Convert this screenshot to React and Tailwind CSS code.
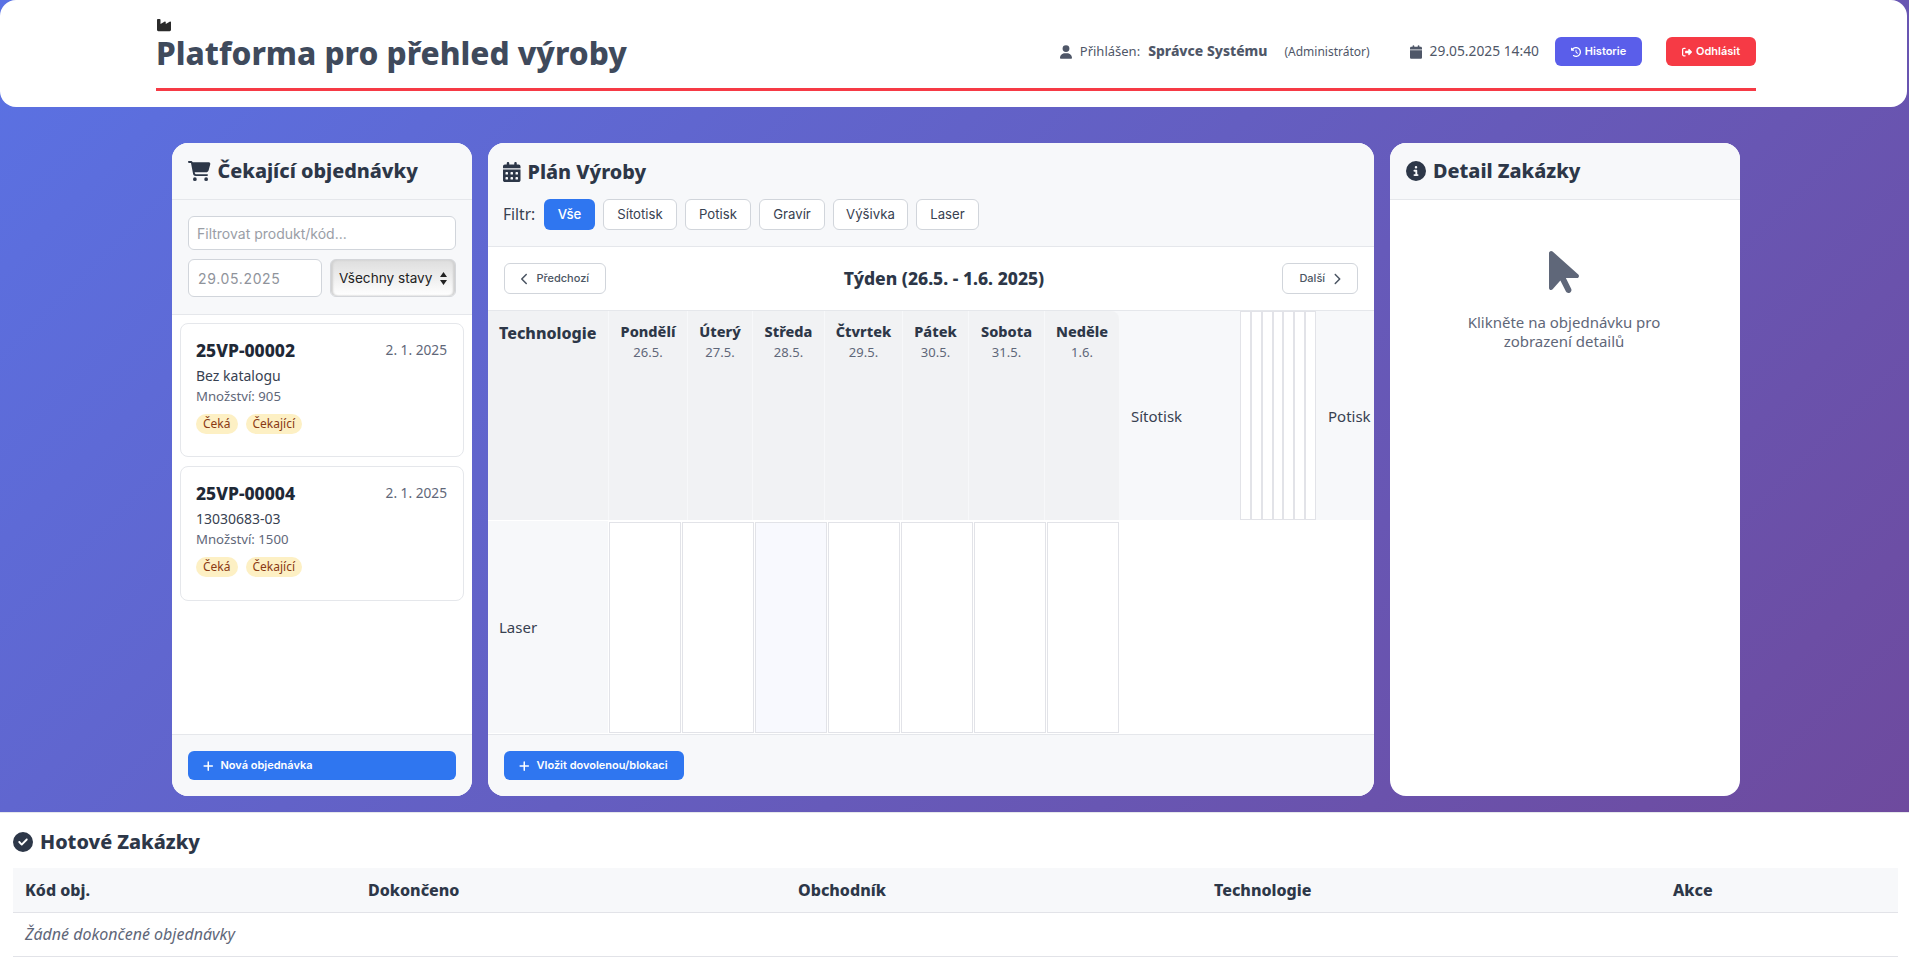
import React from "react";
import { FaIndustry, FaCartShopping, FaCalendarDays, FaCircleInfo, FaUser, FaCalendar, FaClockRotateLeft, FaRightFromBracket, FaArrowPointer, FaCircleCheck, FaPlus, FaChevronLeft, FaChevronRight } from "react-icons/fa6";

const days = [
  ["Pondělí", "26.5.", "w-[78px]"],
  ["Úterý", "27.5.", "w-[64px]"],
  ["Středa", "28.5.", "w-[71px]"],
  ["Čtvrtek", "29.5.", "w-[77px]"],
  ["Pátek", "30.5.", "w-[65px]"],
  ["Sobota", "31.5.", "w-[75px]"],
  ["Neděle", "1.6.", "w-[74px] rounded-tr-lg"],
];
const filters = ["Sítotisk", "Potisk", "Gravír", "Výšivka", "Laser"];
const orders = [
  ["25VP-00002", "Bez katalogu", "905", "h-[134px]"],
  ["25VP-00004", "13030683-03", "1500", "h-[135px]"],
];
const sans = "font-['Noto_Sans',sans-serif]";
const ui = "font-['Inter',sans-serif]";

function PanelTitle({ icon, children }) {
  return (
    <h2 className="flex items-center gap-[7px] text-[19.8px] font-extrabold leading-[28px] text-[#2d3748]">
      {icon}
      {children}
    </h2>
  );
}

function OrderCard({ code, name, qty, h }) {
  return (
    <div className={`${h} rounded-lg border border-[#e5e7eb] bg-white pl-[15px] pr-4 pt-[14px]`}>
      <div className="flex items-center justify-between">
        <span className="text-[17.5px] font-extrabold leading-[24px] text-[#1f2937]">{code}</span>
        <span className="text-[13.7px] text-[#5f6779]">2. 1. 2025</span>
      </div>
      <div className="mt-[3px] text-[14px] leading-[21px] text-[#374151]">{name}</div>
      <div className="text-[13.2px] leading-[21px] text-[#5f6779]">Množství: {qty}</div>
      <div className="mt-[7px] flex gap-2">
        {["Čeká", "Čekající"].map((b) => (
          <span key={b} className="flex h-[20px] items-center rounded-full bg-[#fdf0c4] px-[7px] text-[12px] text-[#8a3a14]">{b}</span>
        ))}
      </div>
    </div>
  );
}

export default function App() {
  return (
    <div className={`${sans} h-[969px] w-[1909px] overflow-hidden bg-white`}>
      <div className="bg-[linear-gradient(135deg,#5a72e4_0%,#6e4a9e_100%)] pb-4">
        <header className="h-[107px] w-[1907px] rounded-2xl bg-white">
          <div className="ml-[156px] h-[91px] w-[1600px] border-b-[3px] border-[#f63a45]">
            <div className="flex items-start justify-between">
              <div className="pt-[18px]">
                <FaIndustry className="h-[14px] w-[16px] text-[#2b2b2b]" />
                <h1 className="mt-[2px] text-[31.6px] font-extrabold leading-[38px] text-[#3f4a5c]">Platforma pro přehled výroby</h1>
              </div>
              <div className="flex items-center pt-[37px] text-[13px] text-[#4f5768]">
                <FaUser className="mr-2 h-[14px] w-[12px]" />
                <span>Přihlášen:</span>
                <span className="ml-2 text-[13.9px] font-extrabold">Správce Systému</span>
                <span className="ml-[17px] text-[12px]">(Administrátor)</span>
                <FaCalendar className="ml-10 mr-2 h-[14px] w-[12px]" />
                <span className="text-[13.8px]">29.05.2025 14:40</span>
                <button className={`${ui} ml-4 flex h-[29px] w-[87px] items-center justify-center gap-1 rounded-md bg-[#5a5eea] text-[11px] font-semibold text-white`}>
                  <FaClockRotateLeft className="h-[10px] w-[10px]" />Historie
                </button>
                <button className={`${ui} ml-[24px] flex h-[29px] w-[90px] items-center justify-center gap-1 rounded-md bg-[#f63a45] text-[11px] font-semibold text-white`}>
                  <FaRightFromBracket className="h-[10px] w-[10px]" />Odhlásit
                </button>
              </div>
            </div>
          </div>
        </header>

        <main className="ml-[172px] mt-9 flex h-[653px] w-[1568px] gap-4">
          <section className="flex w-[300px] flex-col overflow-hidden rounded-2xl bg-white">
            <div className="flex h-[57px] items-center border-b border-[#e5e7eb] bg-[#f7f8fa] px-4">
              <PanelTitle icon={<FaCartShopping className="h-[20px] w-[22.5px]" />}>Čekající objednávky</PanelTitle>
            </div>
            <div className="h-[115px] border-b border-[#e5e7eb] bg-[#f7f8fa] px-4 pt-4">
              <input readOnly placeholder="Filtrovat produkt/kód..." className={`${ui} h-[34px] w-full rounded-md border border-[#d1d5db] bg-white px-2 text-[14px] placeholder:text-[#9a9ea6]`} />
              <div className="mt-[9px] flex gap-2">
                <input readOnly value="29.05.2025" className={`${ui} h-[38px] w-[134px] rounded-md border border-[#d1d5db] bg-white px-[9px] text-[14px] tracking-[0.65px] text-[#8f939b]`} />
                <div className={`${ui} relative flex h-[38px] w-[126px] items-center justify-between rounded-md border border-[#d4d6da] bg-[linear-gradient(180deg,#dedede_0%,#ffffff_100%)] px-2 text-[13.6px] text-[#222] shadow-[inset_2px_0_2px_#d0d0d0,inset_-2px_0_2px_#d0d0d0]`}>
                  <span>Všechny stavy</span>
                  <svg width="7" height="13" viewBox="0 0 7 13" className="fill-[#222]"><path d="M3.5 0 7 5H0zM3.5 13 0 8h7z" /></svg>
                </div>
              </div>
            </div>
            <div className="flex flex-1 flex-col gap-[9px] px-2 pt-2">
              {orders.map((o) => (
                <OrderCard key={o[0]} code={o[0]} name={o[1]} qty={o[2]} h={o[3]} />
              ))}
            </div>
            <div className="h-[62px] border-t border-[#e5e7eb] bg-[#f7f8fa] px-4 pt-4">
              <button className={`${ui} flex h-[29px] w-full items-center gap-[7px] rounded-md bg-[#2f76f0] pl-[15px] text-[11px] font-semibold text-white`}>
                <FaPlus className="h-[12px] w-[10.5px]" />Nová objednávka
              </button>
            </div>
          </section>

          <section className="flex w-[886px] flex-col overflow-hidden rounded-2xl bg-white">
            <div className="h-[104px] border-b border-[#e5e7eb] bg-[#f7f8fa] px-[15px] pt-[15px]">
              <PanelTitle icon={<FaCalendarDays className="h-[20px] w-[17.5px]" />}>Plán Výroby</PanelTitle>
              <div className="mt-[13px] flex items-center">
                <span className="w-[41px] text-[15.5px] text-[#374151]">Filtr:</span>
                <button className={`${ui} mr-2 h-[31px] w-[51px] rounded-md bg-[#2f76f0] text-[13.2px] font-medium text-white`}>Vše</button>
                {filters.map((f, i) => (
                  <button key={f} className={`${ui} mr-2 h-[31px] rounded-md border border-[#d1d5db] bg-white text-[13.2px] text-[#374151] ${["w-[74px]", "w-[66px]", "w-[66px]", "w-[75px]", "w-[63px]"][i]}`}>{f}</button>
                ))}
              </div>
            </div>
            <div className="flex h-[64px] items-center justify-between border-b border-[#e5e7eb] pl-4 pr-4">
              <button className={`${ui} flex h-[31px] w-[102px] items-center justify-center gap-2 rounded-md border border-[#d1d5db] text-[11px] font-medium text-[#4b5563]`}>
                <FaChevronLeft className="h-[12px] w-[7.5px]" />Předchozí
              </button>
              <span className="text-[17.5px] font-extrabold text-[#2d3748]">Týden (26.5. - 1.6. 2025)</span>
              <button className={`${ui} flex h-[31px] w-[76px] items-center justify-center gap-2 rounded-md border border-[#d1d5db] text-[11px] font-medium text-[#4b5563]`}>
                Další<FaChevronRight className="h-[12px] w-[7.5px]" />
              </button>
            </div>
            <div className="flex h-[209px] gap-px overflow-hidden bg-[#f7f8fa]">
              <div className="w-[120px] shrink-0 bg-[#f1f2f4] pl-[11px] pt-[9px] text-[16px] font-extrabold leading-[26px] text-[#2d3748]">Technologie</div>
              {days.map(([d, date, w]) => (
                <div key={d} className={`${w} shrink-0 bg-[#f1f2f4] pt-[9px] text-center`}>
                  <div className="text-[14.5px] font-extrabold leading-[22px] text-[#2d3748]">{d}</div>
                  <div className="text-[13px] leading-[20px] text-[#5f6779]">{date}</div>
                </div>
              ))}
              <div className="flex w-[119px] shrink-0 items-center pl-[11px] pt-[2px] text-[15px] text-[#374151]">Sítotisk</div>
              <div className="flex w-[76px] shrink-0 bg-white">
                {Array.from({ length: 7 }).map((_, i) => (
                  <div key={i} className="flex-1 border border-[#e2e3e8] bg-white" />
                ))}
              </div>
              <div className="flex shrink-0 items-center pl-[11px] pt-[2px] text-[15px] text-[#374151]">Potisk</div>
            </div>
            <div className="flex h-[214px] bg-white pb-px pt-[2px]">
              <div className="-mt-[1px] flex w-[120px] shrink-0 items-center bg-[#f7f8fa] pl-[11px] text-[15px] text-[#374151]">Laser</div>
              <div className="ml-px flex gap-px">
                {days.map(([d], i) => (
                  <div key={d} className={`w-[72px] border border-[#e2e3e8] ${i === 2 ? "bg-[#f8f9fe]" : "bg-white"}`} />
                ))}
              </div>
            </div>
            <div className="h-[62px] border-t border-[#e5e7eb] bg-[#f7f8fa] px-4 pt-4">
              <button className={`${ui} flex h-[29px] w-[180px] items-center gap-[7px] rounded-md bg-[#2f76f0] pl-[15px] text-[11px] font-semibold text-white`}>
                <FaPlus className="h-[12px] w-[10.5px]" />Vložit dovolenou/blokaci
              </button>
            </div>
          </section>

          <section className="flex w-[350px] flex-col overflow-hidden rounded-2xl bg-white">
            <div className="flex h-[57px] items-center border-b border-[#e5e7eb] bg-[#f7f8fa] px-4">
              <PanelTitle icon={<FaCircleInfo className="h-[20px] w-[20px]" />}>Detail Zakázky</PanelTitle>
            </div>
            <div className="flex flex-col items-center pl-[46px] pr-[48px] pt-[48px] text-center text-[15px] leading-[19px] text-[#5f6779]">
              <FaArrowPointer className="h-[48px] w-[30px] text-[#5f6779]" />
              <p className="mt-[17px]">Klikněte na objednávku pro zobrazení detailů</p>
            </div>
          </section>
        </main>
      </div>

      <section className="border-t border-[#e5e7eb] pl-[13px] pr-[11px] pt-[15px]">
        <h2 className="flex items-center gap-[7px] text-[19.8px] font-extrabold leading-[28px] text-[#2d3748]">
          <FaCircleCheck className="h-[20px] w-[20px]" />Hotové Zakázky
        </h2>
        <table className="mt-[12px] w-[1885px] table-fixed border-collapse text-left text-[16px]">
          <colgroup>
            <col className="w-[343px]" />
            <col className="w-[430px]" />
            <col className="w-[416px]" />
            <col className="w-[459px]" />
            <col className="w-[237px]" />
          </colgroup>
          <thead>
            <tr className="h-[44px] border-b border-[#e2e3e8] bg-[#f7f8fa] text-[#2d3748]">
              {["Kód obj.", "Dokončeno", "Obchodník", "Technologie", "Akce"].map((h) => (
                <th key={h} className="px-3 font-extrabold">{h}</th>
              ))}
            </tr>
          </thead>
          <tbody>
            <tr className="h-[44px] border-b border-[#e2e3e8]">
              <td colSpan={5} className="px-3 italic text-[#5f6779]">Žádné dokončené objednávky</td>
            </tr>
          </tbody>
        </table>
      </section>
    </div>
  );
}
